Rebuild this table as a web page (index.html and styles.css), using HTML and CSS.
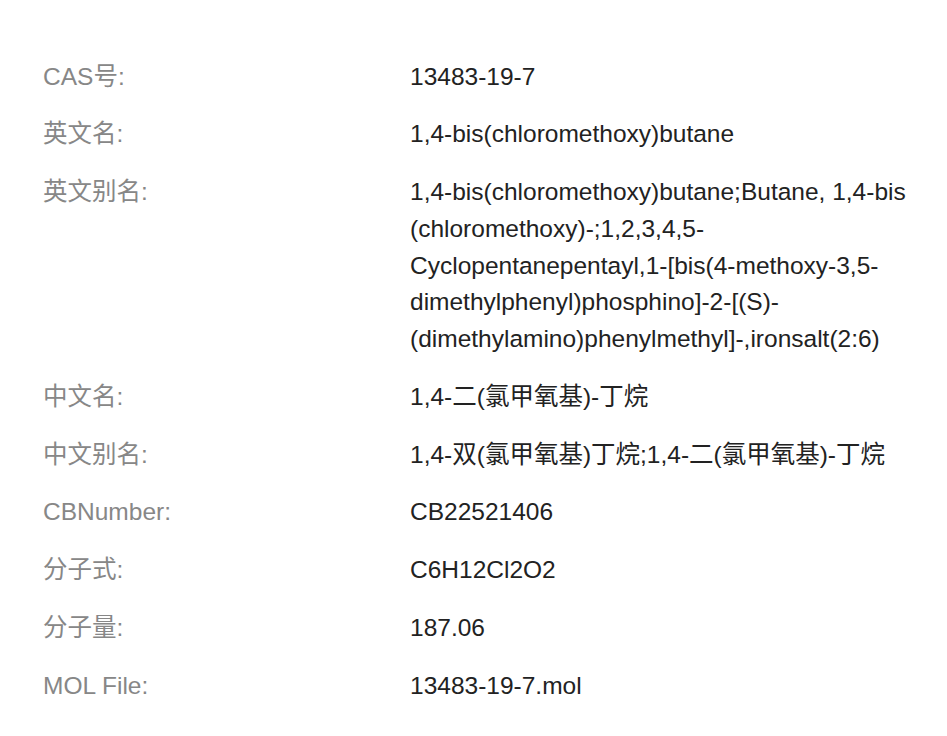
FILE: index.html
```html
<!DOCTYPE html>
<html lang="zh-CN">
<head>
<meta charset="utf-8">
<title>1,4-bis(chloromethoxy)butane</title>
<link rel="stylesheet" href="styles.css">
</head>
<body>
<div class="page">
  <table class="info">
    <tbody>
      <tr><th>CAS号:</th><td>13483-19-7</td></tr>
      <tr><th>英文名:</th><td>1,4-bis(chloromethoxy)butane</td></tr>
      <tr><th>英文别名:</th><td>1,4-bis(chloromethoxy)butane;Butane, 1,4-bis<wbr>(chloromethoxy)-;1,2,3,4,5-Cyclopentanepentayl,1-[bis(4-methoxy-3,5-dimethylphenyl)phosphino]-2-[(S)-(dimethylamino)phenylmethyl]-,ironsalt(2:6)</td></tr>
      <tr><th>中文名:</th><td>1,4-二(氯甲氧基)-丁烷</td></tr>
      <tr><th>中文别名:</th><td>1,4-双(氯甲氧基)丁烷;1,4-二(氯甲氧基)-丁烷</td></tr>
      <tr><th>CBNumber:</th><td>CB22521406</td></tr>
      <tr><th>分子式:</th><td>C6H12Cl2O2</td></tr>
      <tr><th>分子量:</th><td>187.06</td></tr>
      <tr><th>MOL File:</th><td>13483-19-7.mol</td></tr>
    </tbody>
  </table>
</div>
</body>
</html>
```
FILE: styles.css
```css
html, body {
  margin: 0;
  padding: 0;
  background: #ffffff;
}
.page {
  padding: 48px 0 0 43px;
  font-family: "Liberation Sans", Arial, "Noto Sans CJK SC", sans-serif;
  font-size: 24.5px;
  line-height: 36.75px;
}
.info {
  border-collapse: collapse;
}
.info th,
.info td {
  padding: 10.5px 0;
  vertical-align: top;
  text-align: left;
  font-weight: normal;
}
.info th {
  width: 367px;
  color: #878787;
}
.info td {
  width: 512px;
  color: #222222;
}
```
